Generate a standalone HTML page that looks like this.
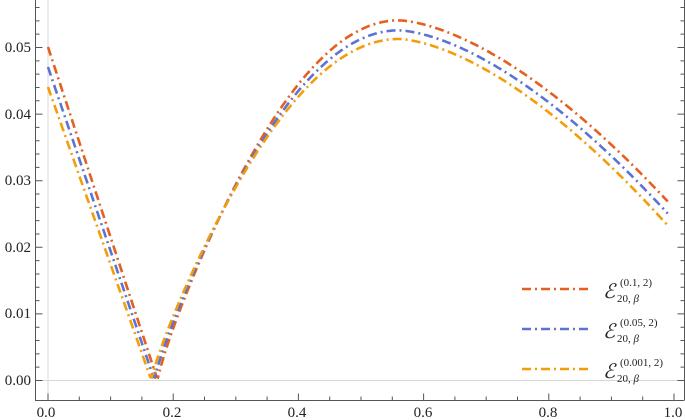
<!DOCTYPE html>
<html><head><meta charset="utf-8"><style>
html,body{margin:0;padding:0;background:#fff;width:685px;height:420px;overflow:hidden}
svg text{font-family:"Liberation Serif",serif;fill:#222}
</style></head><body>
<svg id="s" width="685" height="420" xmlns="http://www.w3.org/2000/svg">
<line x1="48" y1="0" x2="48" y2="400" stroke="#d8d8d8" stroke-width="1"/>
<line x1="35" y1="380.5" x2="684" y2="380.5" stroke="#d8d8d8" stroke-width="1"/>
<g id="axes" stroke="#555" stroke-width="1" fill="none"></g>
<g id="curves" fill="none" stroke-width="2.6" stroke-dasharray="9 4 2 4"></g>
<g font-size="15">
<text x="31" y="52" text-anchor="end">0.05</text>
<text x="31" y="119" text-anchor="end">0.04</text>
<text x="31" y="185" text-anchor="end">0.03</text>
<text x="31" y="252" text-anchor="end">0.02</text>
<text x="31" y="318" text-anchor="end">0.01</text>
<text x="31" y="385" text-anchor="end">0.00</text>
<text x="46" y="417" text-anchor="middle">0.0</text>
<text x="172" y="417" text-anchor="middle">0.2</text>
<text x="297" y="417" text-anchor="middle">0.4</text>
<text x="423" y="417" text-anchor="middle">0.6</text>
<text x="548" y="417" text-anchor="middle">0.8</text>
<text x="673" y="417" text-anchor="middle">1.0</text>
</g>
<g stroke-width="2.6" stroke-dasharray="9 4 2 4">
<line x1="522" y1="289" x2="589" y2="289" stroke="#e5601f"/>
<line x1="522" y1="329" x2="589" y2="329" stroke="#5b74d2"/>
<line x1="522" y1="369" x2="589" y2="369" stroke="#f49d0b"/>
</g>
<g>
<text x="603" y="298" font-size="20" font-style="italic">ℰ</text><text x="620" y="286" font-size="11">(0.1, 2)</text><text x="617" y="302" font-size="11">20, <tspan font-style="italic">β</tspan></text>
<text x="603" y="338" font-size="20" font-style="italic">ℰ</text><text x="620" y="326" font-size="11">(0.05, 2)</text><text x="617" y="342" font-size="11">20, <tspan font-style="italic">β</tspan></text>
<text x="603" y="378" font-size="20" font-style="italic">ℰ</text><text x="620" y="366" font-size="11">(0.001, 2)</text><text x="617" y="382" font-size="11">20, <tspan font-style="italic">β</tspan></text>
</g>
</svg>
<script>
var NS="http://www.w3.org/2000/svg";
function X(x){return 48+626*x}function Y(v){return 380-6660*v}
var ax=document.getElementById("axes"),d="M35.5 0V400.5H684.5M684.5 0V400";
for(var i=0;i<=28;i++){var yy=380.5-i*13.32;if(yy<0)break;var L=(i%5==0)?7:4;d+="M35.5 "+yy+"h"+L+"M684.5 "+yy+"h-"+L;}
for(var j=0;j<=20;j++){var xx=48+j*31.3;var L2=(j%4==0)?7:4;d+="M"+xx+" 400.5v-"+L2;}
var p=document.createElementNS(NS,"path");p.setAttribute("d",d);ax.appendChild(p);
var C=[["#e5601f",0.050,0.175,0.054,0.56,0.0268],["#5b74d2",0.047,0.170,0.0525,0.56,0.0250],["#f49d0b",0.044,0.165,0.0512,0.56,0.0232]];
var cg=document.getElementById("curves");
C.forEach(function(c){var a=c[1],xm=c[2],P=c[3],xp=c[4],E=c[5],s="";
for(var k=0;k<=400;k++){var x=k/400*0.99,v;
if(x<xm)v=a*(xm-x)/xm;else if(x<xp)v=P*Math.pow(Math.sin(Math.PI/2*(x-xm)/(xp-xm)),0.85);else{var t=(x-xp)/(0.99-xp);v=P-(P-E)*Math.pow(t,1.6);}
s+=(k?"L":"M")+X(x).toFixed(1)+" "+Y(v).toFixed(1);}
var q=document.createElementNS(NS,"path");q.setAttribute("d",s);q.setAttribute("stroke",c[0]);cg.appendChild(q);});
</script>
</body></html>
